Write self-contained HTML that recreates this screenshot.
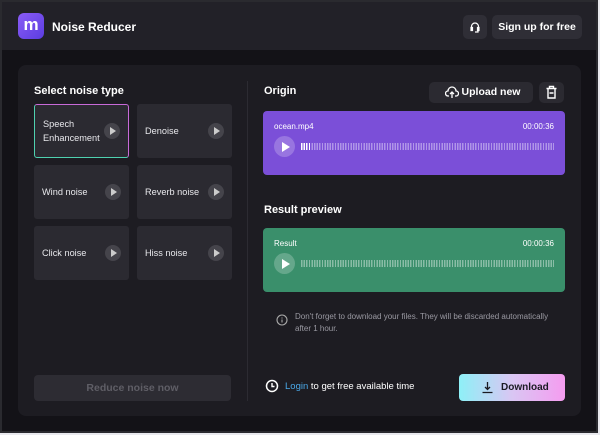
<!DOCTYPE html>
<html><head><meta charset="utf-8"><style>
*{box-sizing:border-box;margin:0;padding:0}
body{width:600px;height:435px;background:#e9e9ee;font-family:"Liberation Sans",sans-serif;position:relative;overflow:hidden}
.frame{position:absolute;left:0;top:0;width:598px;height:433px;background:#131217;border:2px solid #2a2a2f}
.hdr{position:absolute;left:0;top:0;width:594px;height:48px;background:#222128}
.logo{position:absolute;left:16px;top:11px;width:26px;height:26px;border-radius:6px;background:linear-gradient(135deg,#8a5cf6,#5b3de0);color:#fff;font-weight:bold;font-size:17px;text-align:center;line-height:24px}
.title{position:absolute;left:50px;top:18px;color:#fff;font-weight:bold;font-size:12px}
.hbtn{position:absolute;background:#2f2e36;border-radius:5px;color:#fff;font-weight:bold;font-size:10.5px;text-align:center}
.panel{position:absolute;left:16px;top:63px;width:563px;height:351px;background:#1d1c22;border-radius:8px}
.h{position:absolute;color:#fff;font-weight:bold;font-size:11px}
.card{position:absolute;width:95px;height:54px;background:#2b2a31;border-radius:3px;color:#e8e8ec;font-size:9.2px}
.card span{position:absolute;left:8px;top:50%;transform:translateY(-50%);line-height:14px}
.pl{position:absolute;right:8px;top:50%;margin-top:-8px;width:16px;height:16px;border-radius:50%;background:#45444b}
.pl:after{content:"";position:absolute;left:6px;top:4px;border-left:6px solid #ccc;border-top:4px solid transparent;border-bottom:4px solid transparent}
.sel{border:1px solid #c86ad8;border-left-color:#4fd1b0;border-bottom-color:#4fd1b0;background:#2b2a31}
.track{position:absolute;left:263px;width:302px;height:64px;border-radius:4px;color:#fff;font-size:8px}
.track .n{position:absolute;left:11px;top:11px}
.track .t{position:absolute;right:11px;top:11px}
.track .pb{position:absolute;left:11px;top:25px;width:21px;height:21px;border-radius:50%;background:rgba(255,255,255,.22)}
.track .pb:after{content:"";position:absolute;left:8px;top:6px;border-left:8px solid #fff;border-top:5px solid transparent;border-bottom:5px solid transparent}
.wave{position:absolute;left:38px;top:32px;width:253px;height:7px;background:repeating-linear-gradient(90deg,rgba(255,255,255,.4) 0 1.4px,transparent 1.4px 2.6px)}
</style></head><body>
<div class="frame">
 <div class="hdr">
  <div class="logo">m</div>
  <div class="title">Noise Reducer</div>
  <div class="hbtn" style="left:461px;top:13px;width:24px;height:24px"><svg width="24" height="24" viewBox="0 0 24 24"><path d="M8.5 15v-3.5a3.5 3.5 0 0 1 7 0V15M8 12.5h1.5v3H8zM14.5 12.5H16v3h-1.5zM15 15.5v1.5h-3" stroke="#fff" stroke-width="1.2" fill="none"/></svg></div>
  <div class="hbtn" style="left:490px;top:13px;width:90px;height:24px;line-height:24px">Sign up for free</div>
 </div>
 <div class="panel">
  <div class="h" style="left:16px;top:20px">Select noise type</div>
  <div class="card sel" style="left:16px;top:39px"><span>Speech<br>Enhancement</span><i class="pl"></i></div>
  <div class="card" style="left:119px;top:39px"><span>Denoise</span><i class="pl"></i></div>
  <div class="card" style="left:16px;top:100px"><span>Wind noise</span><i class="pl"></i></div>
  <div class="card" style="left:119px;top:100px"><span>Reverb noise</span><i class="pl"></i></div>
  <div class="card" style="left:16px;top:161px"><span>Click noise</span><i class="pl"></i></div>
  <div class="card" style="left:119px;top:161px"><span>Hiss noise</span><i class="pl"></i></div>
  <div style="position:absolute;left:16px;top:310px;width:197px;height:26px;background:#2d2c33;border-radius:4px;color:#5f5e66;font-weight:bold;font-size:10.5px;text-align:center;line-height:26px">Reduce noise now</div>
  <div style="position:absolute;left:229px;top:16px;width:1px;height:320px;background:#2c2b32"></div>
 </div>
 <div class="h" style="left:262px;top:83px">Origin</div>
 <div class="hbtn" style="left:427px;top:80px;width:104px;height:21px;line-height:21px;background:#2b2a31;padding-left:20px"><svg style="position:absolute;left:16px;top:4px" width="14" height="13" viewBox="0 0 14 13"><path d="M4 10H3a2.5 2.5 0 0 1 0-5 4 4 0 0 1 8 0 2.5 2.5 0 0 1 0 5h-1M7 12V6M5 8l2-2 2 2" stroke="#fff" stroke-width="1.3" fill="none"/></svg>Upload new</div>
 <div class="hbtn" style="left:537px;top:80px;width:25px;height:21px;background:#2b2a31"><svg width="25" height="21" viewBox="0 0 25 21"><path d="M7.5 6.5h10M10.5 6.5V4.5h4v2M9 6.5v9.5h7V6.5M10.5 11h4" stroke="#fff" stroke-width="1.4" fill="none"/></svg></div>
 <div class="track" style="top:109px;background:#7b4fd8;left:261px"><div class="n">ocean.mp4</div><div class="t">00:00:36</div><div class="pb"></div><div class="wave"></div><div style="position:absolute;left:38px;top:32px;width:10px;height:7px;background:repeating-linear-gradient(90deg,#fff 0 1.4px,transparent 1.4px 2.6px)"></div></div>
 <div class="h" style="left:262px;top:202px">Result preview</div>
 <div class="track" style="top:226px;background:#3a8f6b;left:261px"><div class="n">Result</div><div class="t">00:00:36</div><div class="pb"></div><div class="wave"></div></div>
 <svg style="position:absolute;left:274px;top:312px" width="12" height="12" viewBox="0 0 12 12"><circle cx="6" cy="6" r="5" stroke="#aaa" stroke-width="1.1" fill="none"/><path d="M6 3.5v1M6 5.5v3" stroke="#aaa" stroke-width="1.1"/></svg>
 <div style="position:absolute;left:293px;top:309px;width:270px;color:#9a99a2;font-size:8px;line-height:12px">Don't forget to download your files. They will be discarded automatically after 1 hour.</div>
 <svg style="position:absolute;left:263px;top:377px" width="14" height="14" viewBox="0 0 14 14"><circle cx="7" cy="7" r="5.5" stroke="#fff" stroke-width="1.5" fill="none"/><path d="M7 4v3.5h2.5" stroke="#fff" stroke-width="1.4" fill="none"/></svg>
 <div style="position:absolute;left:283px;top:379px;color:#fff;font-size:9.5px"><span style="color:#4aa8e8">Login</span> to get free available time</div>
 <div style="position:absolute;left:457px;top:372px;width:106px;height:27px;border-radius:4px;background:linear-gradient(90deg,#8ef0f7,#d9c6f3,#f59cf0);color:#1a1a22;font-weight:bold;font-size:10px;line-height:27px;padding-left:42px"><svg style="position:absolute;left:22px;top:7px" width="13" height="13" viewBox="0 0 13 13"><path d="M6.5 1v7M4 6l2.5 2.5L9 6M1.5 11.5h10" stroke="#1a1a22" stroke-width="1.3" fill="none"/></svg>Download</div>
</div>
</body></html>
